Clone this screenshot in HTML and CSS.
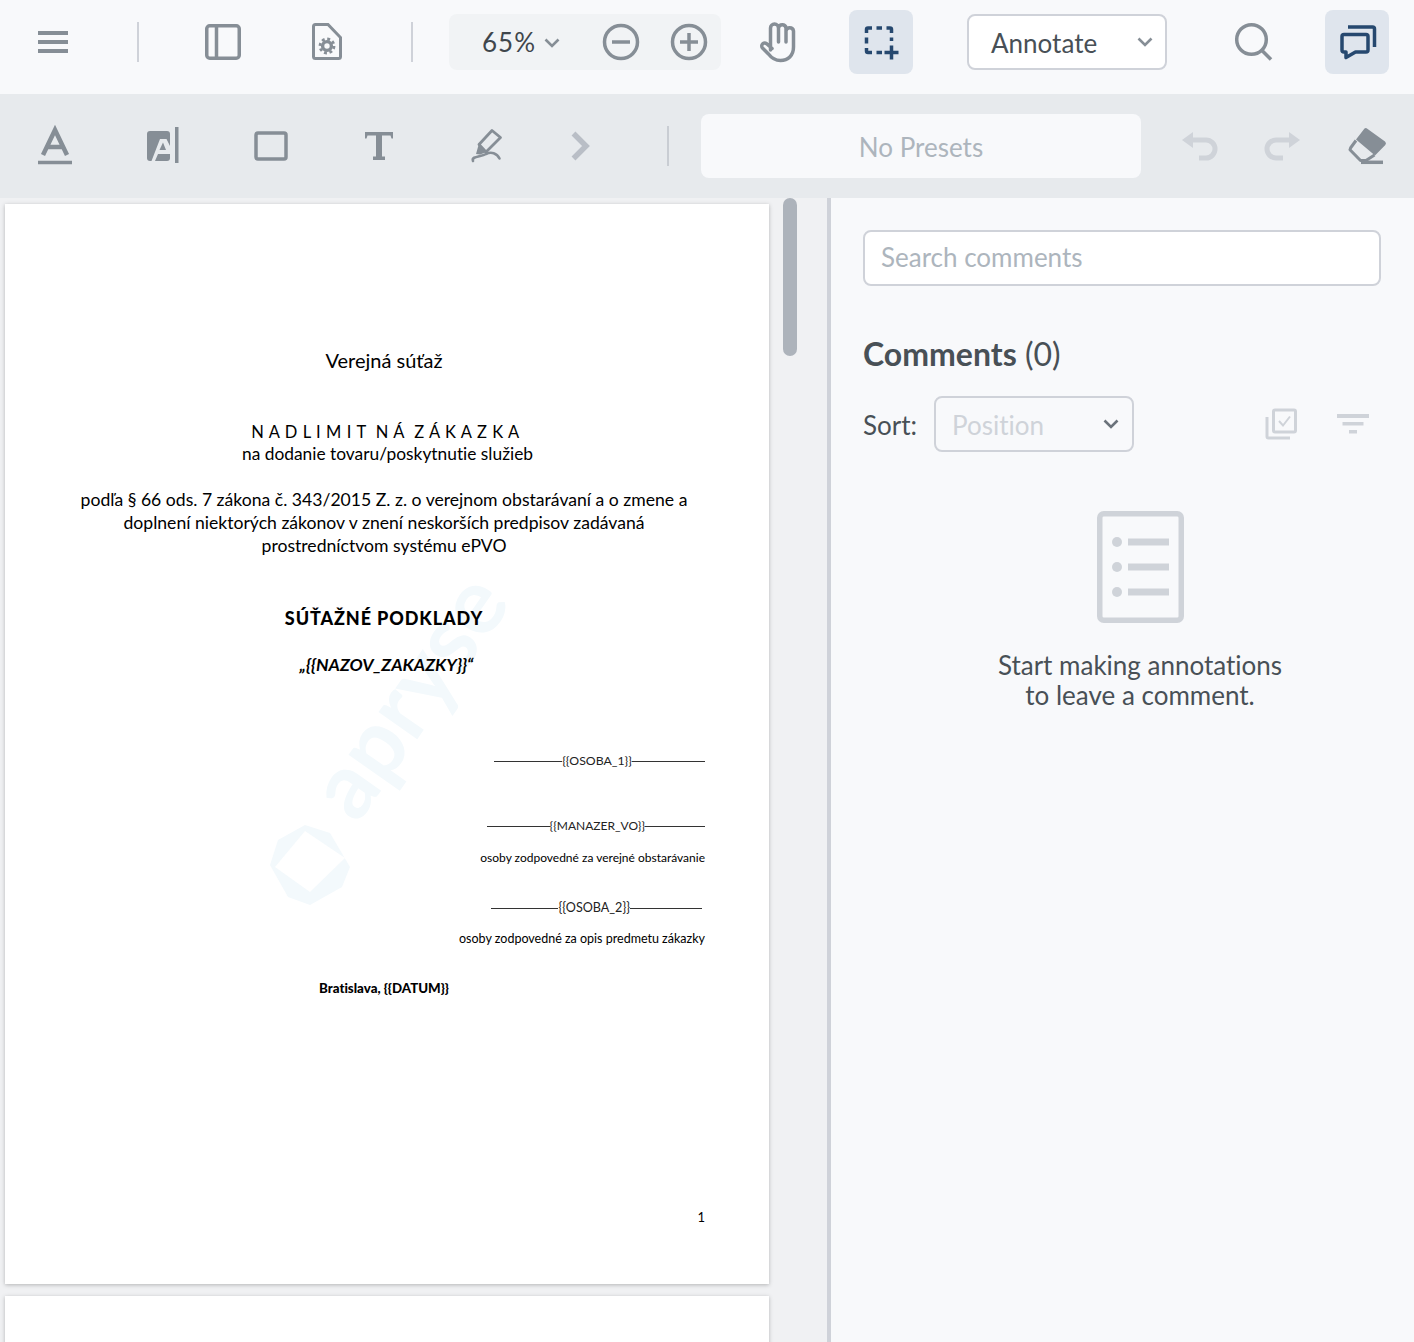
FILE: index.html
```html
<!DOCTYPE html>
<html lang="sk">
<head>
<meta charset="utf-8">
<title>Document viewer</title>
<link rel="stylesheet" href="styles.css">
</head>
<body>
<div class="app">
  <header class="bar-top">
    <div class="icon-btn" aria-label="Menu"><svg class="ic" viewBox="0 0 64 64"><rect class="solid" x="17" y="21" width="30" height="4"/><rect class="solid" x="17" y="30" width="30" height="4"/><rect class="solid" x="17" y="39" width="30" height="4"/></svg></div>
    <span class="sep sep-a"></span>
    <div class="icon-btn" aria-label="Panel"><svg class="ic" viewBox="0 0 64 64"><rect x="15.75" y="15.75" width="32.5" height="32.5" rx="3"/><path d="M25.5 15.75V48.25"/></svg></div>
    <div class="icon-btn gap-doc" aria-label="Document settings"><svg class="ic" viewBox="0 0 64 64"><path class="thin" d="M20.5 14.5H33L45.5 27.5V46.5a2 2 0 0 1-2 2H20.5a2 2 0 0 1-2-2V16.5a2 2 0 0 1 2-2z"/><circle cx="32" cy="36" r="4.4" stroke-width="3.4"/><circle cx="32" cy="36" r="7" stroke-width="2.8" stroke-dasharray="2.9 2.6"/></svg></div>
    <span class="sep sep-b"></span>
    <div class="zoom">
      <span class="zoom-val">65%</span>
      <svg class="chev" viewBox="0 0 16 10"><path d="M1.5 1.5 8 8l6.5-6.5"/></svg>
      <svg class="ic zoom-minus" viewBox="0 0 64 64"><circle cx="32" cy="32" r="16.5"/><path d="M23 32H41"/></svg>
      <svg class="ic zoom-plus" viewBox="0 0 64 64"><circle cx="32" cy="32" r="16.5"/><path d="M23 32H41M32 23V41"/></svg>
    </div>
    <div class="icon-btn gap-hand" aria-label="Pan"><svg class="ic" viewBox="0 0 64 64"><path stroke-linejoin="round" stroke-linecap="round" d="M25.5 40V18a4 4 0 0 1 8 0V32M33.5 18a3.8 3.8 0 0 1 7.5 0V32M41 21a3.8 3.8 0 0 1 7.5 0V37c0 8.5-5.5 13.5-13 13.5-5.5 0-9-2.500-12-6.500l-6-6a3 3 0 0 1 4.500-4l5 4.500"/></svg></div>
    <div class="icon-btn active gap-mark" aria-label="Select area"><svg class="ic ic-blue" viewBox="0 0 64 64"><path d="M17.500 23V19.500a1.500 1.500 0 0 1 1.500-1.500H23M27.500 18H33M37.500 18H41a1.500 1.500 0 0 1 1.500 1.500V23M42.500 27.500V31M17.500 27.500V33.500M17.500 38V41a1.500 1.500 0 0 0 1.500 1.500H23M27.500 42.500H33"/><path d="M42.500 35.500V49.500M35.500 42.500H49.500"/></svg></div>
    <div class="select select-mode"><span>Annotate</span><svg class="chev" viewBox="0 0 16 10"><path d="M1.500 1.500 8 8l6.500-6.500"/></svg></div>
    <div class="icon-btn gap-search" aria-label="Search"><svg class="ic" viewBox="0 0 64 64"><circle cx="30.500" cy="29.500" r="14.800"/><path d="M41 40.500 50 49.500"/></svg></div>
    <div class="icon-btn active gap-cmt" aria-label="Comments"><svg class="ic ic-blue" viewBox="0 0 64 64"><path d="M23 17H47.500a2 2 0 0 1 2 2V37"/><path stroke-linejoin="round" d="M19 24.500H41a2 2 0 0 1 2 2V40a2 2 0 0 1-2 2H30.500L21 47.500V42H19a2 2 0 0 1-2-2V26.500a2 2 0 0 1 2-2z"/></svg></div>
  </header>

  <div class="bar-tools">
    <div class="icon-btn" aria-label="Text underline"><svg class="ic" viewBox="0 0 64 64"><path stroke-width="4.500" d="M20 41 32 16 44 41M24 33H40"/><path d="M15 48.500H49"/></svg></div>
    <div class="icon-btn gap-tool" aria-label="Free text"><svg class="ic" viewBox="0 0 64 64"><rect class="solid" x="16" y="17" width="23" height="30" rx="3"/><path class="cut" d="M20.500 47 29 25H35.500L39 32V40H27L24 47z"/><path class="solid" d="M28.500 36 32 28.500 35 36z"/><rect class="solid" x="44" y="13" width="3.500" height="36"/></svg></div>
    <div class="icon-btn gap-tool" aria-label="Rectangle"><svg class="ic" viewBox="0 0 64 64"><rect x="17" y="19" width="30" height="26" rx="2"/></svg></div>
    <div class="icon-btn gap-tool" aria-label="Type"><svg class="ic" viewBox="0 0 64 64"><path class="solid" d="M18 18H46V24.500H44.500L43.500 21.500H35V42.500H38V46H26V42.500H29V21.500H20.500L19.500 24.500H18z"/></svg></div>
    <div class="icon-btn gap-tool" aria-label="Highlight"><svg class="ic" viewBox="0 0 64 64"><path stroke-width="2.800" stroke-linejoin="round" d="M37 16.500 45.500 23.500 31 38 24 30.500z"/><path class="solid" d="M24 29.500 32 38 25 40.500 21 40z"/><path stroke-width="2.600" stroke-linecap="round" d="M18 47C16 42 26 43 31 40 36 37.500 42 39 44.500 44.500"/></svg></div>
    <div class="icon-btn gap-chev" aria-label="More"><svg class="ic ic-dim" viewBox="0 0 64 64"><path stroke-width="5.500" d="M24.500 19.500 37 32 24.500 44.500"/></svg></div>
    <span class="sep sep-c"></span>
    <div class="presets">No Presets</div>
    <div class="icon-btn gap-undo" aria-label="Undo"><svg class="ic ic-off" viewBox="0 0 64 64"><path class="solid" d="M15 26 26 18V34z"/><path stroke-width="5" d="M24 26H39a9 9 0 0 1 0 18H32"/></svg></div>
    <div class="icon-btn gap-redo" aria-label="Redo"><svg class="ic ic-off" viewBox="0 0 64 64"><path class="solid" d="M49 26 38 18V34z"/><path stroke-width="5" d="M40 26H25a9 9 0 0 0 0 18H32"/></svg></div>
    <div class="icon-btn gap-redo" aria-label="Eraser"><svg class="ic" viewBox="0 0 64 64"><path class="solid" d="M29.500 14.500a2.500 2.500 0 0 1 2.800.200L50 27.500a2.500 2.500 0 0 1 .300 3.500L40 41.500 21 25.500z"/><path stroke-width="3" stroke-linejoin="round" d="M21 26.500 15.500 34a2 2 0 0 0 .200 2.500L25.500 46.500H31L39.500 41"/><path stroke-width="3.500" d="M26 48.300H48"/></svg></div>
  </div>

  <main class="work">
    <section class="viewer">
      <article class="page">
        <div class="watermark">apryse</div>
        <svg class="wm-logo" viewBox="0 0 80 80"><path d="M35 0 60 8 80 42 72 62 40 80 18 72 0 40 8 15zM35 6 5 42 40 67 75 33z" fill-rule="evenodd"/></svg>
        <h1 class="d-title">Verejná súťaž</h1>
        <p class="d-spaced">N A D L I M I T &nbsp;N Á &nbsp;Z Á K A Z K A</p>
        <p class="d-line">na dodanie tovaru/poskytnutie služieb</p>
        <p class="d-para">podľa § 66 ods. 7 zákona č. 343/2015 Z. z. o verejnom obstarávaní a o zmene a<br>doplnení niektorých zákonov v znení neskorších predpisov zadávaná<br>prostredníctvom systému ePVO</p>
        <h2 class="d-head">SÚŤAŽNÉ PODKLADY</h2>
        <p class="d-name">„{{NAZOV_ZAKAZKY}}“</p>
        <div class="sig sig-1"><i class="rule r1a"></i><span>{{OSOBA_1}}</span><i class="rule r1b"></i></div>
        <div class="sig sig-2"><i class="rule r2a"></i><span>{{MANAZER_VO}}</span><i class="rule r2b"></i></div>
        <p class="d-role role-1">osoby zodpovedné za verejné obstarávanie</p>
        <div class="sig sig-3"><i class="rule r3a"></i><span>{{OSOBA_2}}</span><i class="rule r3b"></i></div>
        <p class="d-role role-2">osoby zodpovedné za opis predmetu zákazky</p>
        <p class="d-place">Bratislava, {{DATUM}}</p>
        <p class="d-num">1</p>
      </article>
      <article class="page"></article>
      <div class="scroll-thumb"></div>
    </section>
    <div class="divider"></div>
    <aside class="notes">
      <div class="search">Search comments</div>
      <h2 class="notes-title"><b>Comments</b> (0)</h2>
      <div class="sort-row">
        <span class="sort-label">Sort:</span>
        <div class="select select-sort"><span>Position</span><svg class="chev chev-dark" viewBox="0 0 16 10"><path d="M1.500 1.500 8 8l6.500-6.500"/></svg></div>
        <svg class="mini check-ic" viewBox="0 0 32 32"><rect x="8.500" y="2" width="22" height="22" rx="1.500"/><path d="M2 9V28.500a1.500 1.500 0 0 0 1.500 1.500H25"/><path d="M14 13 18 17.500 25 8.500" stroke-width="2"/></svg>
        <svg class="filter-ic" viewBox="0 0 32 20"><rect width="32" height="4"/><rect x="5.500" y="8" width="21" height="3.500"/><rect x="12" y="16" width="8" height="3.500"/></svg>
      </div>
      <div class="empty">
        <svg class="empty-ic" viewBox="0 0 87 112"><rect class="frame" x="2.750" y="2.750" width="81.500" height="106.500" rx="4"/><circle cx="20" cy="31" r="5"/><rect x="31" y="27.500" width="41" height="7"/><circle cx="20" cy="56" r="5"/><rect x="31" y="52.500" width="41" height="7"/><circle cx="20" cy="81" r="5"/><rect x="31" y="77.500" width="41" height="7"/></svg>
        <p class="empty-text">Start making annotations<br>to leave a comment.</p>
      </div>
    </aside>
  </main>
</div>
</body>
</html>
```
FILE: styles.css
```css
* { box-sizing: border-box; }
html, body { margin: 0; height: 100%; overflow: hidden; }
body { font-family: Lato, "Liberation Sans", sans-serif; font-variant-ligatures: none; color: #485056; background: #f8f9fb; }
.app { width: 1414px; height: 1342px; display: flex; flex-direction: column; overflow: hidden; }

.bar-top { height: 94px; flex: none; padding: 10px 0 20px 21px; display: flex; align-items: center; background: #f8f9fb; }
.bar-tools { height: 104px; flex: none; padding-left: 23px; display: flex; align-items: center; background: #e7eaed; }

.icon-btn { width: 64px; height: 64px; flex: none; border-radius: 8px; }
.icon-btn.active { background: #dfe5ed; }
.ic { display: block; width: 64px; height: 64px; fill: none; stroke: #868e96; stroke-width: 3.5; }
.ic .solid { fill: #868e96; stroke: none; }
.ic .cut { fill: #e7eaed; stroke: none; }
.ic .thin { stroke-width: 3; }
.ic-blue { stroke: #26486f; }
.ic-dim { stroke: #b9bec6; }
.ic-off { stroke: #cfd3d9; }
.ic-off .solid { fill: #cfd3d9; }

.sep { flex: none; width: 2px; height: 40px; background: #cfd2d9; }
.sep-a { margin: 0 52px; }
.sep-b { margin: 0 36px 0 52px; }
.sep-c { background: #c9cdd3; margin: 0 32px 0 54px; }
.gap-doc { margin-left: 40px; }
.gap-hand { margin-left: 24px; }
.gap-mark { margin-left: 40px; }
.gap-search { margin-left: 54px; }
.gap-cmt { margin-left: 40px; }
.gap-tool { margin-left: 44px; }
.gap-chev { margin-left: 30px; }
.gap-undo { margin-left: 26px; }
.gap-redo { margin-left: 20px; }

.zoom { width: 272px; height: 56px; flex: none; position: relative; display: flex; align-items: center; padding-left: 33px; background: #f1f3f5; border-radius: 8px; }
.zoom-val { font-size: 26px; letter-spacing: 1px; color: #3f464c; }
.zoom .chev { margin-left: 8px; margin-top: 2px; }
.zoom-minus { position: absolute; left: 140px; top: -4px; }
.zoom-plus { position: absolute; left: 208px; top: -4px; }
.chev { width: 16px; height: 10px; flex: none; fill: none; stroke: #868e96; stroke-width: 2.600; }
.chev-dark { stroke: #6b737b; }

.select { height: 56px; flex: none; display: flex; align-items: center; justify-content: space-between; border: 2px solid #cfd2d9; border-radius: 8px; font-size: 26px; }
.select span { padding-top: 2px; }
.select-mode { width: 200px; margin-left: 54px; padding: 0 12px 0 22px; background: #fff; }
.select-sort { width: 200px; padding: 0 13px 0 16px; color: #cfd3d9; }

.presets { width: 440px; height: 64px; flex: none; display: flex; align-items: center; justify-content: center; padding-top: 2px; background: #f8f9fb; border-radius: 8px; font-size: 26px; color: #adb5bd; }

.work { flex: 1; min-height: 0; display: flex; }
.viewer { width: 827px; flex: none; position: relative; overflow: hidden; padding: 6px 0 0 5px; background: #f0f1f3; }
.divider { width: 4px; flex: none; background: #cfd2d9; }
.scroll-thumb { position: absolute; left: 783px; top: 0; width: 14px; height: 158px; border-radius: 7px; background: #adb3bb; }

.page { width: 764px; height: 1080px; position: relative; overflow: hidden; margin-bottom: 12px; padding: 144px 64px 0 58px; background: #fff; color: #000; box-shadow: 0 1px 4px rgba(0, 0, 0, .25); text-align: center; font-family: Lato, "Liberation Sans", sans-serif; }
.page h1, .page h2, .page p { margin: 0; font-weight: 400; }
.watermark { position: absolute; left: 266px; top: 440px; font-size: 92px; line-height: 100px; font-weight: 700; color: #f3f9fc; transform: rotate(-55deg); transform-origin: center; }
.wm-logo { position: absolute; left: 265px; top: 621px; width: 80px; height: 80px; fill: #f3f9fc; }
.d-title, .d-spaced, .d-line, .d-para, .d-head, .d-name, .d-role, .d-place, .d-num, .sig { position: relative; }
.d-title { font-size: 20px; line-height: 24px; }
.d-spaced { margin-top: 50px !important; font-size: 16.500px; line-height: 20px; letter-spacing: .6px; padding-left: 3px; }
.d-line { font-size: 17.350px; line-height: 23px; padding-left: 7px; }
.d-para { margin-top: 23px !important; font-size: 17.600px; line-height: 23px; }
.d-head { margin-top: 49px !important; font-size: 18px; line-height: 24px; font-weight: 900 !important; letter-spacing: .9px; }
.d-name { margin-top: 23px !important; font-size: 17.500px; line-height: 24px; font-weight: 700 !important; font-style: italic; padding-left: 5px; }
.sig { display: flex; align-items: center; justify-content: flex-end; height: 16px; font-size: 12.300px; line-height: 16px; color: #222; }
.rule { display: block; height: 1px; background: #333; }
.sig-1 { margin-top: 76px; }
.sig-2 { margin-top: 49px; font-size: 12px; }
.sig-3 { margin-top: 34px; padding-right: 3px; font-size: 12.600px; }
.r1a { width: 68px; } .r1b { width: 73px; }
.r2a { width: 63px; } .r2b { width: 60px; }
.r3a { width: 67px; } .r3b { width: 72px; }
.d-role { line-height: 16px; text-align: right; }
.role-1 { margin-top: 16px !important; font-size: 12px; }
.role-2 { margin-top: 15px !important; font-size: 12.500px; }
.d-place { margin-top: 33px !important; font-size: 13.300px; line-height: 16px; font-weight: 900 !important; }
.d-num { margin-top: 213px !important; font-size: 13px; line-height: 16px; text-align: right; color: #000; }

.notes { flex: 1; min-width: 0; padding: 32px 33px 0 32px; background: #f8f9fb; }
.search { height: 56px; display: flex; align-items: center; padding: 0 0 2px 16px; border: 2px solid #cfd2d9; border-radius: 8px; background: #fff; font-size: 26px; color: #adb5bd; }
.notes-title { margin: 48px 0 0; font-size: 32px; line-height: 40px; font-weight: 400; }
.notes-title b { font-weight: 700; }
.sort-row { margin-top: 22px; display: flex; align-items: center; }
.sort-label { width: 71px; flex: none; font-size: 26px; padding-top: 2px; }
.mini { width: 32px; height: 32px; margin-left: 131px; flex: none; fill: none; stroke: #cfd3d9; stroke-width: 3; }
.filter-ic { width: 32px; height: 20px; margin-left: 40px; flex: none; fill: #cfd3d9; }
.empty { margin-top: 59px; padding-left: 36px; text-align: center; }
.empty-ic { display: block; width: 87px; height: 112px; margin: 0 auto; fill: #cfd3d9; }
.empty-ic .frame { fill: none; stroke: #cfd3d9; stroke-width: 5.500; }
.empty-text { margin: 27px 0 0; font-size: 26px; line-height: 30px; }
```
